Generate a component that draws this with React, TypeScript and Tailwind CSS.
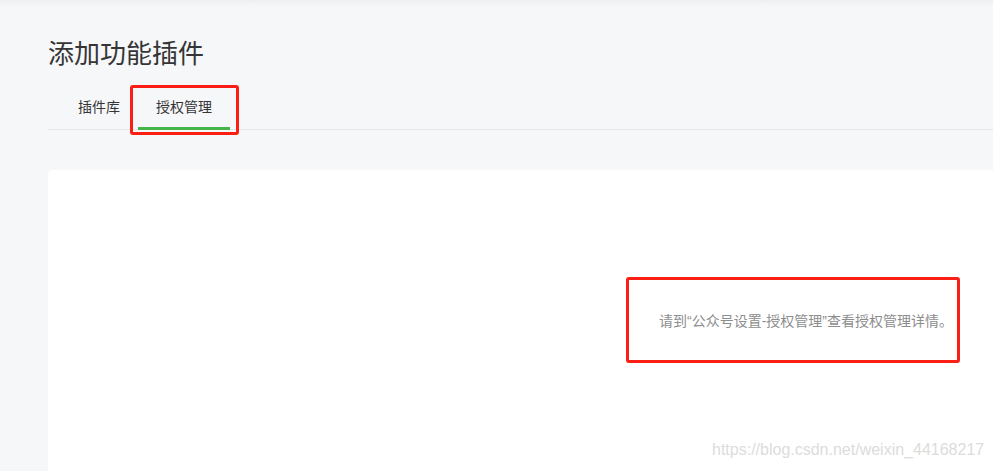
export default function App() {
  return (
    <div className="relative h-[471px] overflow-hidden bg-[#f6f7f9] pl-12 font-['Liberation_Sans','Noto_Sans_CJK_SC',sans-serif] text-[#353535]">
      {/* soft shadow from the header above */}
      <div className="pointer-events-none absolute inset-x-0 top-0 h-[6px] bg-gradient-to-b from-black/[0.035] to-transparent" />

      <h1 className="pt-[36px] text-[26px] leading-9 font-normal">添加功能插件</h1>

      <nav className="mt-[23px] flex border-b border-[#e4e8eb] pl-3">
        <a className="-mb-px px-[18px] pb-2 text-sm leading-6 border-b-[3px] border-transparent cursor-pointer">
          插件库
        </a>
        <a className="-mb-px px-[18px] pb-2 text-sm leading-6 border-b-[3px] border-[#44b549] cursor-pointer">
          授权管理
        </a>
      </nav>

      <div className="mt-10 h-[400px] rounded-tl-sm bg-white pl-[611px] pt-[139px]">
        <p className="text-sm leading-6 text-[#8d8d8d] whitespace-nowrap">
          请到“公众号设置-授权管理”查看授权管理详情。
        </p>
      </div>

      {/* annotation boxes */}
      <div className="pointer-events-none absolute left-[130px] top-[85px] h-[50px] w-[109px] rounded-[3px] border-[3px] border-[#fa1e14]" />
      <div className="pointer-events-none absolute left-[626px] top-[277px] h-[86px] w-[334px] rounded-[3px] border-[3px] border-[#fa1e14]" />

      <div className="pointer-events-none absolute left-[712px] top-[441px] text-[16px] leading-[18px] text-[#dcdcdc] whitespace-nowrap">
        https://blog.csdn.net/weixin_44168217
      </div>
    </div>
  );
}
